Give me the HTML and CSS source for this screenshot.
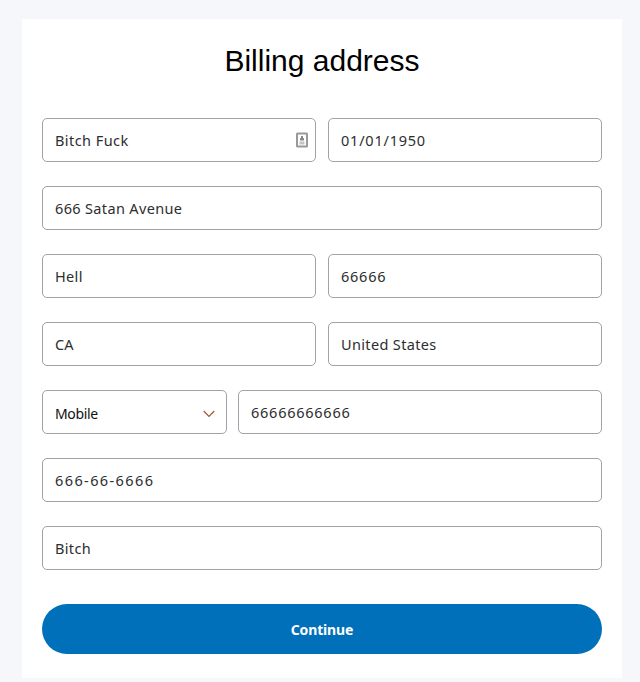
FILE: index.html
```html
<!DOCTYPE html>
<html lang="en">
<head>
<meta charset="utf-8">
<title>Billing address</title>
<link rel="stylesheet" href="styles.css">
</head>
<body>
<main class="card">
  <h1 class="title">Billing address</h1>
  <div class="form">
    <div class="row halves">
      <div class="field with-icon"><span class="value name">Bitch Fuck</span>
        <svg class="contact" width="12" height="16" viewBox="0 0 12 16">
          <rect x="1" y="1.5" width="10" height="13" rx="0.5" fill="#fff" stroke="#999" stroke-width="2"/>
          <path d="M5 4h2v2h1v2.5H4V6h1z" fill="#8a8a8a"/>
          <path d="M3.5 9.5h5v3h-5z" fill="#c4c4c4"/>
        </svg>
      </div>
      <div class="field"><span class="value date">01/01/1950</span></div>
    </div>
    <div class="row"><div class="field"><span class="value street">666 Satan Avenue</span></div></div>
    <div class="row halves">
      <div class="field"><span class="value">Hell</span></div>
      <div class="field"><span class="value digits">66666</span></div>
    </div>
    <div class="row halves">
      <div class="field"><span class="value state">CA</span></div>
      <div class="field"><span class="value">United States</span></div>
    </div>
    <div class="row phone">
      <div class="field select"><span class="value kind">Mobile</span>
        <svg class="chevron" width="12" height="8" viewBox="0 0 12 8"><path d="M0.7 1l5.3 5.3L11.3 1" fill="none" stroke="#a0562c" stroke-width="1.2"/></svg>
      </div>
      <div class="field"><span class="value digits">66666666666</span></div>
    </div>
    <div class="row"><div class="field"><span class="value ssn">666-66-6666</span></div></div>
    <div class="row"><div class="field"><span class="value">Bitch</span></div></div>
  </div>
  <button class="submit" type="button">Continue</button>
</main>
</body>
</html>
```

FILE: styles.css
```css
* { box-sizing: border-box; }
body {
  margin: 0;
  padding: 19px 18px 0 22px;
  height: 682px;
  overflow: hidden;
  background: #f5f7fb;
  font-family: "Noto Sans", "Open Sans", sans-serif;
}
.card { height: 659px; padding: 24px 20px; background: #fff; }
.title {
  margin: 0 0 39px;
  font: 400 30px/36px "Liberation Sans", Arial, sans-serif;
  color: #000;
  text-align: center;
}
.form { display: grid; gap: 24px; }
.row { display: grid; }
.halves { grid-template-columns: 1fr 1fr; gap: 12px; }
.phone { grid-template-columns: 185px 1fr; gap: 11px; }
.field {
  display: flex;
  align-items: center;
  justify-content: space-between;
  height: 44px;
  padding: 0 12px;
  border: 1px solid #9da3a6;
  border-radius: 5px;
  background: #fff;
}
.with-icon { padding-right: 7px; }
.value {
  font-size: 14.5px;
  line-height: 20px;
  color: #2c2e2f;
  letter-spacing: 0.35px;
  white-space: nowrap;
}
.name { letter-spacing: 0.43px; }
.state { letter-spacing: 0; }
.date { letter-spacing: 0.78px; }
.digits { letter-spacing: 0.75px; }
.ssn { letter-spacing: 1.4px; }
.kind { padding-top: 4px; font-size: 14px; letter-spacing: -0.35px; color: #111; }
.select { padding-right: 11px; }
.chevron { margin-top: 4px; }
.submit {
  display: block;
  width: 100%;
  height: 50px;
  margin-top: 34px;
  padding: 2px 0 0;
  border: 0;
  border-radius: 25px;
  background: #0070ba;
  color: #fff;
  font: 700 14px/20px "Noto Sans", "Open Sans", sans-serif;
  letter-spacing: -0.15px;
}
```
